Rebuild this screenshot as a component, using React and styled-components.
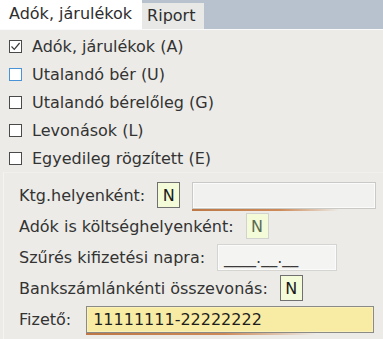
import React from "react";
import styled, { createGlobalStyle } from "styled-components";

const GlobalStyle = createGlobalStyle`
  html, body {
    margin: 0;
    padding: 0;
    background: #ecebe7;
  }
  body {
    font-family: "DejaVu Sans", Verdana, sans-serif;
    font-size: 16px;
    color: #333;
  }
`;

const Page = styled.div`
  width: 383px;
  height: 339px;
  overflow: hidden;
  background: #ecebe7;
`;

const Tabs = styled.div`
  display: flex;
  align-items: flex-end;
  height: 29px;
  background: #b7c2ce;
  border-bottom: 1px solid #fafafa;
`;

const Tab = styled.div`
  display: flex;
  align-items: center;
  height: ${(p) => (p.$active ? "29px" : "26px")};
  padding: ${(p) => (p.$active ? "0 10px 3px 9px" : "0 9px 1px 5px")};
  background: ${(p) => (p.$active ? "#ffffff" : "#e8e8e6")};
  color: #2e2e2e;
  box-sizing: border-box;
  white-space: nowrap;
`;

const CheckList = styled.div`
  display: flex;
  flex-direction: column;
  padding: 2px 0 0 9px;
`;

const CheckRow = styled.label`
  display: flex;
  align-items: center;
  gap: 10px;
  height: 28px;
`;

const Box = styled.span`
  display: inline-flex;
  align-items: center;
  justify-content: center;
  width: 13px;
  height: 13px;
  box-sizing: border-box;
  border: 1px solid ${(p) => (p.$focus ? "#4a93d6" : "#4a4a4a")};
  background: #fff;
`;

const Group = styled.div`
  display: flex;
  flex-direction: column;
  gap: 3px;
  margin: 0 0 0 3px;
  padding: 8px 0 6px 15px;
  border-left: 1px solid #f4f4f2;
  border-top: 1px solid #f1f0ed;
`;

const FieldRow = styled.div`
  display: flex;
  align-items: center;
  gap: ${(p) => p.$gap || 12}px;
  height: 28px;
`;

const Label = styled.span`
  white-space: nowrap;
  color: #333;
`;

const FlagBox = styled.span`
  display: inline-flex;
  align-items: center;
  justify-content: center;
  width: 23px;
  height: 26px;
  box-sizing: border-box;
  border: 1px solid ${(p) => (p.$disabled ? "#d2d2ce" : "#707070")};
  background: #f3fbd9;
  color: ${(p) => (p.$disabled ? "#5d6b55" : "#1a1a1a")};
`;

const TextInput = styled.div`
  position: relative;
  display: flex;
  align-items: center;
  width: ${(p) => p.$w}px;
  height: 27px;
  box-sizing: border-box;
  padding-left: 6px;
  border: 1px solid ${(p) => p.$border || "#c9c9c6"};
  background: ${(p) => p.$bg || "#f1f1f0"};
  box-shadow: inset 0 0 0 1px ${(p) => p.$inner || "#fbfbfb"};
  color: ${(p) => p.$color || "#1e1e1e"};
  ${(p) =>
    p.$glow &&
    `
    &::after {
      content: "";
      position: absolute;
      left: -1px;
      right: 20%;
      bottom: -3px;
      height: 2px;
      background: linear-gradient(to right, #b5632a, #c8793f 60%, rgba(200,140,90,0));
      opacity: 0.85;
    }
  `}
`;

const Check = () => (
  <svg width="11" height="11" viewBox="0 0 11 11">
    <path d="M1.5 5.5 L4.3 8.4 L9.6 2" fill="none" stroke="#3a3a3a" strokeWidth="1.2" />
  </svg>
);

const checks = [
  { label: "Adók, járulékok (A)", checked: true },
  { label: "Utalandó bér (U)", focus: true },
  { label: "Utalandó bérelőleg (G)" },
  { label: "Levonások (L)" },
  { label: "Egyedileg rögzített (E)" },
];

export default function App() {
  return (
    <Page>
      <GlobalStyle />
      <Tabs>
        <Tab $active>Adók, járulékok</Tab>
        <Tab>Riport</Tab>
      </Tabs>
      <CheckList>
        {checks.map((c) => (
          <CheckRow key={c.label}>
            <Box $focus={c.focus}>{c.checked && <Check />}</Box>
            {c.label}
          </CheckRow>
        ))}
      </CheckList>
      <Group>
        <FieldRow>
          <Label>Ktg.helyenként:</Label>
          <FlagBox>N</FlagBox>
          <TextInput $w={184} $glow />
        </FieldRow>
        <FieldRow>
          <Label>Adók is költséghelyenként:</Label>
          <FlagBox $disabled>N</FlagBox>
        </FieldRow>
        <FieldRow>
          <Label>Szűrés kifizetési napra:</Label>
          <TextInput $w={120} $bg="#f4f4f3" $border="#d4d4d1" $color="#3a3a3a">
            ____.__.__
          </TextInput>
        </FieldRow>
        <FieldRow>
          <Label>Bankszámlánkénti összevonás:</Label>
          <FlagBox>N</FlagBox>
        </FieldRow>
        <FieldRow $gap={15}>
          <Label>Fizető:</Label>
          <TextInput $w={288} $bg="#f8eba3" $border="#8a8a86" $inner="#faf0b8" $glow>
            11111111-22222222
          </TextInput>
        </FieldRow>
      </Group>
    </Page>
  );
}
